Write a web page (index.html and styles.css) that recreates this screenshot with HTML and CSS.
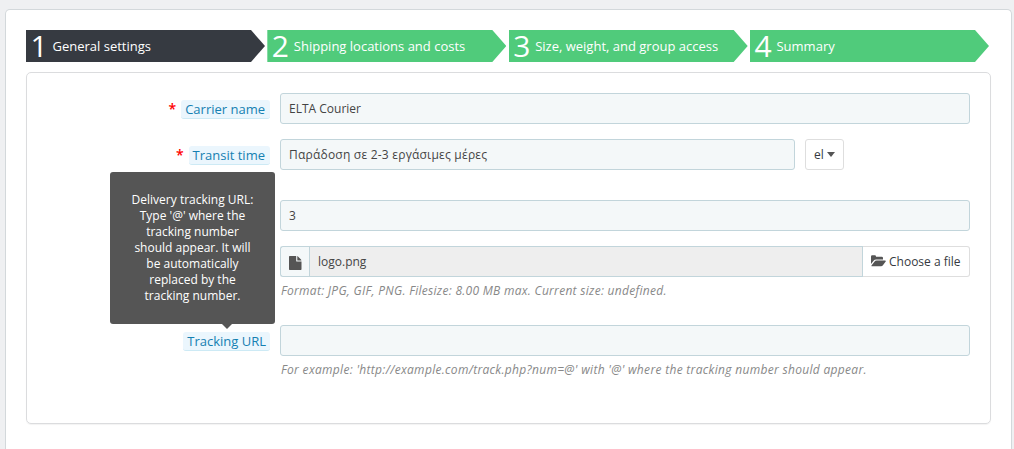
FILE: index.html
```html
<!DOCTYPE html>
<html lang="en">
<head>
<meta charset="utf-8">
<title>Carrier wizard</title>
<link rel="stylesheet" href="styles.css">
</head>
<body>
<main class="wizard">
  <ul class="steps">
    <li class="step step-active"><span class="step-number">1</span><span class="step-name">General settings</span></li>
    <li class="step"><span class="step-number">2</span><span class="step-name">Shipping locations and costs</span></li>
    <li class="step"><span class="step-number">3</span><span class="step-name">Size, weight, and group access</span></li>
    <li class="step"><span class="step-number">4</span><span class="step-name">Summary</span></li>
  </ul>
  <form class="panel">
    <div class="row">
      <div class="label-cell"><span class="required">*</span><label class="label label-required">Carrier name</label></div>
      <div class="field">ELTA Courier</div>
    </div>
    <div class="row row-transit">
      <div class="label-cell"><span class="required">*</span><label class="label label-required">Transit time</label></div>
      <div class="field field-greek" lang="el">Παράδοση σε 2-3 εργάσιμες μέρες</div>
      <div class="lang">el<span class="caret"></span></div>
    </div>
    <div class="row">
      <div class="label-cell"></div>
      <div class="field">3</div>
    </div>
    <div class="row row-file">
      <div class="label-cell"></div>
      <div class="control">
        <div class="file-group">
          <span class="file-addon"><svg class="file-icon" width="13" height="14" viewBox="0 0 13 14"><path d="M.7 0H7.2V4.9Q7.2 5.6 7.9 5.6H12.5V13.3Q12.5 14 11.8 14H.7Q0 14 0 13.3V.7Q0 0 .7 0ZM8.3 .1Q8.7 .3 9 .6L12 3.6Q12.3 3.9 12.4 4.5H8.3Z"/></svg></span>
          <span class="file-name">logo.png</span>
          <span class="file-button"><svg class="folder-icon" width="15" height="12" viewBox="0 0 15 12"><path d="M0 9.6V1.4Q0 .3 1.2 .3H3.8Q5 .3 5 1.4V1.8H10.7Q12 1.8 12 3V4.5H5.2Q3.6 4.5 2.6 5.7L0 9ZM.5 10.6L3.4 6.7Q4.2 5.5 5.6 5.5H14.2Q15.2 5.5 14.7 6.4L12.1 10.1Q11.3 11.3 9.9 11.3H1.1Q.2 11.3 .5 10.6Z"/></svg>Choose a file</span>
        </div>
        <p class="help">Format: JPG, GIF, PNG. Filesize: 8.00 MB max. Current size: undefined.</p>
      </div>
    </div>
    <div class="row row-url">
      <div class="label-cell">
        <label class="label">Tracking URL</label>
        <div class="tooltip">Delivery tracking URL: Type '@' where the tracking number should appear. It will be automatically replaced by the tracking number.</div>
      </div>
      <div class="control">
        <div class="field"></div>
        <p class="help help-url">For example: 'http://example.com/track.php?num=@' with '@' where the tracking number should appear.</p>
      </div>
    </div>
  </form>
</main>
</body>
</html>
```
FILE: styles.css
```css
* { box-sizing: border-box; }

body {
  margin: 0;
  padding: 9px 2px 0 5px;
  height: 449px;
  background: #eff0f2;
  color: #444;
  font: 12px/17px "Open Sans", "Noto Sans", sans-serif;
}

.wizard {
  height: 440px;
  padding: 20px 20px 0;
  background: #fff;
  border: 1px solid #d3d8db;
  border-bottom: 0;
  border-radius: 5px 5px 0 0;
}

.steps {
  display: flex;
  gap: 2.33px;
  width: 963px;
  margin: 0 0 10px;
  padding: 0;
  list-style: none;
}

.step {
  flex: 1;
  display: flex;
  align-items: center;
  height: 32px;
  padding-left: 4.5px;
  background: #50cb7b;
  color: #fff;
  font-size: 13px;
  white-space: nowrap;
  clip-path: polygon(0 0, calc(100% - 14px) 0, 100% 50%, calc(100% - 14px) 100%, 0 100%);
}

.step-active { background: #363a41; }

.step-number {
  width: 22px;
  font-size: 30px;
  font-weight: 500;
  line-height: 32px;
}

.panel {
  display: flex;
  flex-direction: column;
  gap: 15px;
  height: 352px;
  padding: 20px;
  border: 1px solid #dbdcde;
  border-radius: 5px;
  box-shadow: 0 1px 1px rgba(0, 0, 0, .05);
}

.row { display: flex; align-items: flex-start; }
.row-transit { margin-bottom: 15px; }
.row-url { margin-top: 11px; }

.label-cell {
  position: relative;
  display: flex;
  justify-content: flex-end;
  width: 223px;
  margin-right: 10px;
  padding-top: 7px;
}

.label {
  height: 19px;
  padding: 0 4px;
  background: #ebf6fd;
  border-bottom: 1px solid #cdeaf5;
  border-radius: 3px;
  color: #1580b2;
  font-size: 13px;
  line-height: 19px;
}

.label-required { padding-right: 5px; }

.required {
  margin-right: 5px;
  color: #f00;
  font-size: 14px;
  font-weight: 600;
  line-height: 17px;
}

.control { flex: 1; }

.field {
  flex: 1;
  height: 31px;
  padding: 6px 8px;
  background: #f4f8f9;
  border: 1px solid #c2d5db;
  border-radius: 3px;
}

.field-greek { letter-spacing: .22px; }

.lang {
  display: flex;
  align-items: center;
  width: 39px;
  height: 31px;
  margin: 0 126px 0 10px;
  padding-left: 8px;
  border: 1px solid #dedede;
  border-radius: 3px;
  color: #363a41;
}

.caret {
  margin-left: 3px;
  border: 4.5px solid transparent;
  border-top: 5px solid #555;
  border-bottom: 0;
}

.file-group { display: flex; height: 31px; line-height: 29px; }

.file-addon {
  display: flex;
  align-items: center;
  width: 29px;
  padding-left: 8px;
  background: #f4f8f9;
  border: 1px solid #c2d5db;
  border-right: 0;
  border-radius: 3px 0 0 3px;
}

.file-icon, .folder-icon { fill: #555; }
.file-icon { margin-top: 2px; }
.folder-icon { margin-top: -1px; }

.file-name {
  flex: 1;
  padding-left: 8px;
  background: #eee;
  border: 1px solid #c2d5db;
}

.file-button {
  display: flex;
  align-items: center;
  gap: 3px;
  width: 107px;
  padding-left: 8px;
  border: 1px solid #dedede;
  border-left: 0;
  border-radius: 0 3px 3px 0;
  color: #363a41;
  white-space: nowrap;
}

.help {
  margin: 5px 0 0 1px;
  color: #888;
  font-style: italic;
  letter-spacing: .285px;
}

.help-url { letter-spacing: .31px; }

.tooltip {
  position: absolute;
  right: -5px;
  bottom: 27px;
  width: 165px;
  height: 152px;
  padding: 20px 20px;
  background: #555;
  border-radius: 3px;
  color: #fff;
  line-height: 16px;
  text-align: center;
}

.tooltip::after {
  content: "";
  position: absolute;
  top: 100%;
  left: 112px;
  border: 5px solid transparent;
  border-top-color: #555;
  border-bottom: 0;
}
```
